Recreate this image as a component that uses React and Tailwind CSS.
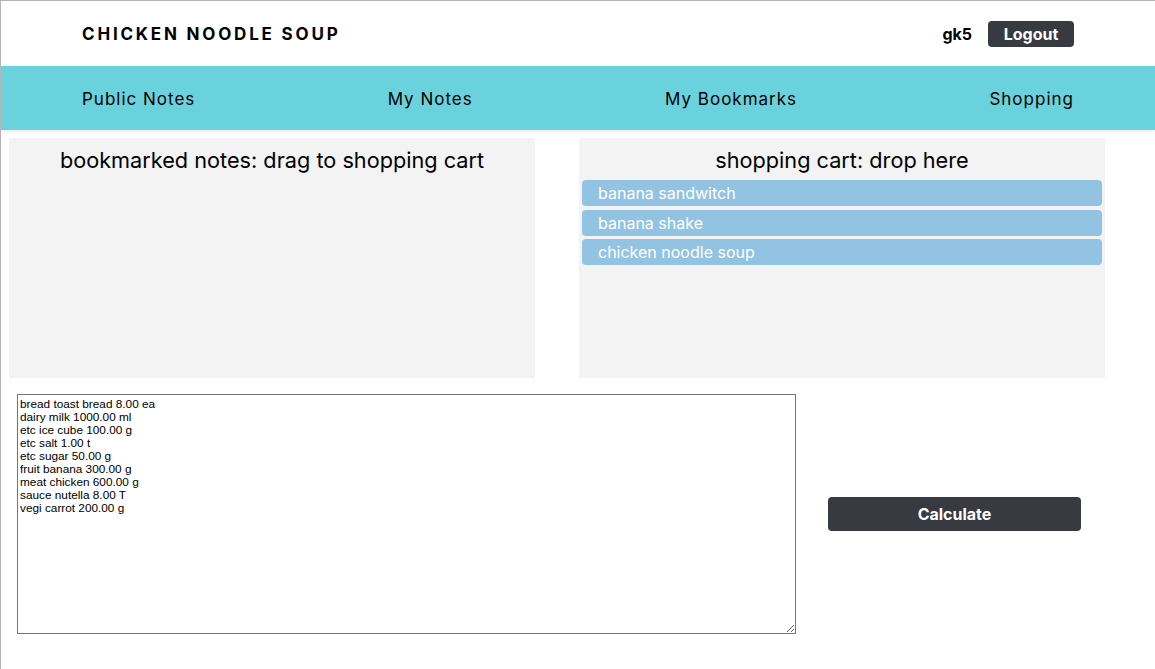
import React from 'react'

const cart = ['banana sandwitch', 'banana shake', 'chicken noodle soup']
const list = `bread toast bread 8.00 ea
dairy milk 1000.00 ml
etc ice cube 100.00 g
etc salt 1.00 t
etc sugar 50.00 g
fruit banana 300.00 g
meat chicken 600.00 g
sauce nutella 8.00 T
vegi carrot 200.00 g`

export default function App() {
  return (
    <div className="w-[1155px] h-[669px] bg-white border-t border-l border-[#b5b5b5] font-['Inter',sans-serif] text-black overflow-hidden">
      <header className="h-[65px] flex items-center justify-between pl-[81px] pr-[81px]">
        <h1 className="mt-[3px] text-[17px] font-bold tracking-[2.8px]">CHICKEN NOODLE SOUP</h1>
        <div className="flex items-center gap-4">
          <span className="text-[16px] font-bold">gk5</span>
          <button className="h-[26px] w-[86px] rounded bg-[#373a40] text-white font-bold text-[16px]">Logout</button>
        </div>
      </header>
      <nav className="h-[64px] bg-[#6ad2dd] flex items-center justify-between px-[81px] pt-[3px] text-[17px] tracking-[1px] shadow-[0_2px_4px_rgba(0,0,0,0.08)]">
        <span>Public Notes</span>
        <span>My Notes</span>
        <span>My Bookmarks</span>
        <span>Shopping</span>
      </nav>
      <div className="flex gap-[44px] pl-[8px] pt-[8px]">
        <div className="w-[526px] h-[240px] bg-[#f3f3f3]">
          <h2 className="text-center text-[21.7px] pt-[8px] leading-[28px]">bookmarked notes: drag to shopping cart</h2>
        </div>
        <div className="w-[526px] h-[240px] bg-[#f3f3f3] px-[3px]">
          <h2 className="text-center text-[21.7px] pt-[8px] leading-[28px]">shopping cart: drop here</h2>
          <div className="flex flex-col gap-[3.5px] mt-[6px]">
            {cart.map(c => (
              <div key={c} className="h-[26px] rounded bg-[#93c3e3] text-white text-[16px] pl-[16px] flex items-center">{c}</div>
            ))}
          </div>
        </div>
      </div>
      <div className="flex items-center pl-[16px] pt-[16px]">
        <textarea
          readOnly
          defaultValue={list}
          className="w-[779px] h-[240px] border border-[#767676] px-[2px] pt-[3px] text-[11.8px] leading-[13px] font-['Liberation_Sans',sans-serif] resize-y"
        />
        <button className="ml-[32px] -mt-[1px] w-[253px] h-[34px] rounded bg-[#373a40] text-white font-bold text-[16px]">Calculate</button>
      </div>
    </div>
  )
}
